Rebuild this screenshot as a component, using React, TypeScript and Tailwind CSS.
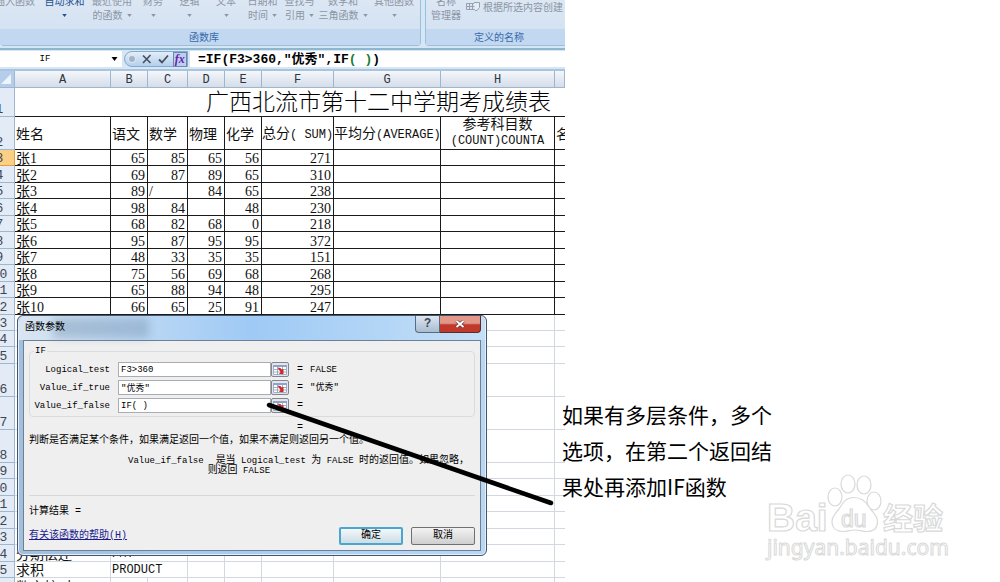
import React from "react";

const SERIF = "font-['Liberation_Serif','Noto_Sans_CJK_SC',serif]";
const MONO = "font-['Liberation_Mono','Noto_Sans_CJK_SC',monospace]";

type RibbonItem = { lines: string[]; width: string; active?: boolean; arrow: boolean };

const ribbonItems: RibbonItem[] = [
  { lines: ["自动求和"], width: "w-[49px]", active: true, arrow: true },
  { lines: ["最近使用", "的函数"], width: "w-[46px]", arrow: true },
  { lines: ["财务"], width: "w-[36px]", arrow: true },
  { lines: ["逻辑"], width: "w-[37px]", arrow: true },
  { lines: ["文本"], width: "w-[36px]", arrow: true },
  { lines: ["日期和", "时间"], width: "w-[37px]", arrow: true },
  { lines: ["查找与", "引用"], width: "w-[37px]", arrow: true },
  { lines: ["数学和", "三角函数"], width: "w-[50px]", arrow: true },
  { lines: ["其他函数"], width: "w-[52px]", arrow: true },
];

function Arrow({ className }: { className: string }) {
  return (
    <svg viewBox="0 0 6 4" className={className} fill="currentColor" aria-hidden="true">
      <path d="M0 0h6L3 4z" />
    </svg>
  );
}

function RibbonButton({ item }: { item: RibbonItem }) {
  return (
    <button
      type="button"
      className={`${item.width} flex shrink-0 flex-col items-center whitespace-nowrap ${item.active ? "text-[#24508f]" : "text-[#8b95a3]"}`}
    >
      <span>{item.lines[0]}</span>
      <span className="flex h-[14px] items-center gap-1">
        {item.lines[1]}
        {item.arrow && <Arrow className="h-[3px] w-[5px]" />}
      </span>
    </button>
  );
}

function Ribbon() {
  return (
    <div className="flex h-[50px] gap-1 overflow-hidden border-b-2 border-[#8fb6cf] bg-[#d5e6f4] pb-[2px] text-[10px] leading-[14px]">
      <section className="flex w-[421px] shrink-0 flex-col rounded-b-sm border-r border-b border-[#9dbfdd] bg-linear-to-b from-[#dce7f4] to-[#cfdff0]">
        <div className="-mt-[6px] flex h-[35px]">
          <button type="button" className="flex w-[41px] shrink-0 justify-end pr-[6px] whitespace-nowrap text-[#8b95a3]">
            插入函数
          </button>
          <div className="-mr-px h-[23px] w-px bg-[#a9bdd3]" />
          {ribbonItems.map((item) => (
            <RibbonButton key={item.lines[0]} item={item} />
          ))}
        </div>
        <div className="flex-1 bg-[#c1d8f0] pl-[189px] leading-4 text-[#3a68ab]">函数库</div>
      </section>
      <section className="flex min-w-0 flex-1 flex-col rounded-bl-sm border-b border-l border-[#9dbfdd] bg-linear-to-b from-[#dce7f4] to-[#cfdff0] text-[#8b95a3]">
        <div className="-mt-[6px] flex h-[35px]">
          <button type="button" className="flex w-[40px] shrink-0 flex-col items-center whitespace-nowrap">
            <span>名称</span>
            <span>管理器</span>
          </button>
          <button type="button" className="flex h-[26px] items-center gap-[3px] whitespace-nowrap">
            <svg viewBox="0 0 14 12" className="h-3 w-[14px]" fill="none" stroke="#96a0ae" aria-hidden="true">
              <path d="M.5 2.5h9v6h-9zM.5 5.5h9M3.5 2.5v6M6.5 2.5v6" />
              <path d="M8 1.5h5.5v5L11 9.500H9" fill="#e3ebf4" />
            </svg>
            根据所选内容创建
          </button>
        </div>
        <div className="flex-1 bg-[#c1d8f0] pl-[48px] leading-4 whitespace-nowrap text-[#3a68ab]">定义的名称</div>
      </section>
    </div>
  );
}

function FormulaBar() {
  return (
    <div className="flex h-[21px] border-b-2 border-[#a9c4dc] bg-[#d7e6f4] pt-px pb-[2px]">
      <div className="flex w-[122px] shrink-0 items-center bg-white">
        <input
          aria-label="名称框"
          defaultValue="IF"
          className={`${MONO} w-[90px] min-w-0 pt-[2px] text-center text-[9px] text-black outline-none`}
        />
        <button type="button" aria-label="名称列表" className="ml-[21px]">
          <Arrow className="h-1 w-[7px] text-black" />
        </button>
      </div>
      <div className="ml-[2px] flex w-[64px] shrink-0 items-center rounded-l-full border border-[#86a9cf] bg-linear-to-b from-[#e2edf9] to-[#b5cfec]">
        <span className="ml-1 size-[6px] rounded-full bg-[#a4b4c8] shadow-[0_0_0_1px_#dbe6f2]" />
        <button type="button" aria-label="取消输入" className="ml-[7px]">
          <svg viewBox="0 0 10 10" className="size-[10px]" fill="none" stroke="#45505e" strokeWidth="1.6" aria-hidden="true">
            <path d="M1 1.500l7.500 7.500M8.500 1L1 9" />
          </svg>
        </button>
        <button type="button" aria-label="输入" className="ml-[6px]">
          <svg viewBox="0 0 11 10" className="h-[10px] w-[11px]" fill="none" stroke="#45505e" strokeWidth="1.8" aria-hidden="true">
            <path d="M1 5.500l3 3L10 1.500" />
          </svg>
        </button>
        <button
          type="button"
          className="ml-1 h-[15px] w-[15px] border border-[#6f86b8] bg-[#bcd0ee] font-['Liberation_Serif',serif] text-[12px] leading-[12px] font-bold text-[#6a1fa8] italic"
        >
          fx
        </button>
      </div>
      <div
        role="textbox"
        aria-label="编辑栏"
        contentEditable
        suppressContentEditableWarning
        className={`${MONO} ml-[2px] min-w-0 flex-1 overflow-hidden bg-white pl-2 text-[13px] leading-[18px] font-bold whitespace-pre text-black outline-none`}
      >
        =IF(F3&gt;360,"优秀",IF<span className="text-[#1c7a2c]">( )</span>)
      </div>
    </div>
  );
}

const columns = ["A", "B", "C", "D", "E", "F", "G", "H", ""];

const students: string[][] = [
  ["张1", "65", "85", "65", "56", "271"],
  ["张2", "69", "87", "89", "65", "310"],
  ["张3", "89", "/", "84", "65", "238"],
  ["张4", "98", "84", "", "48", "230"],
  ["张5", "68", "82", "68", "0", "218"],
  ["张6", "95", "87", "95", "95", "372"],
  ["张7", "48", "33", "35", "35", "151"],
  ["张8", "75", "56", "69", "68", "268"],
  ["张9", "65", "88", "94", "48", "295"],
  ["张10", "66", "65", "25", "91", "247"],
];

const lowerRows: { n: number; height: string; a?: string; b?: string }[] = [
  { n: 13, height: "h-[16px]" },
  { n: 14, height: "h-[16px]" },
  { n: 15, height: "h-[17px]" },
  { n: 16, height: "h-[33px]" },
  { n: 17, height: "h-[33px]" },
  { n: 18, height: "h-[33px]" },
  { n: 19, height: "h-[16px]" },
  { n: 20, height: "h-[17px]" },
  { n: 21, height: "h-[16px]" },
  { n: 22, height: "h-[17px]" },
  { n: 23, height: "h-[16px]" },
  { n: 24, height: "h-[17px]", a: "分期偿还", b: "PMT" },
  { n: 25, height: "h-[16px]", a: "求积", b: "PRODUCT" },
  { n: 26, height: "h-[17px]", a: "数字校对" },
];

function RowHead({ n, selected }: { n: number; selected?: boolean }) {
  return (
    <th
      scope="row"
      className={`${MONO} border-r border-b p-0 text-center align-bottom text-[13px] leading-[12px] font-normal text-[#3c4655] ${selected ? "border-[#e0a040] bg-[#fbcf85]" : "border-[#9eb6ce] bg-[#e2ebf6]"}`}
    >
      {n}
    </th>
  );
}

const INK = "border-r border-b border-[#1a1a1a] p-0 pt-[2px]";
const GRID = "border-r border-b border-[#d3d8e0] p-0 pt-[2px]";

function Latin({ children }: { children: string }) {
  return <span className="font-['Liberation_Mono',monospace] text-[12px]">{children}</span>;
}

function Sheet() {
  return (
    <table className={`${SERIF} -ml-[15px] w-[calc(100%+15px)] table-fixed border-separate border-spacing-0 text-[14px] leading-[13px] text-[#111]`}>
      <colgroup>
        <col className="w-[30px]" />
        <col className="w-[96px]" />
        <col className="w-[37px]" />
        <col className="w-[40px]" />
        <col className="w-[37px]" />
        <col className="w-[37px]" />
        <col className="w-[72px]" />
        <col className="w-[107px]" />
        <col className="w-[114px]" />
        <col />
      </colgroup>
      <thead>
        <tr className="h-[17px]">
          <th className="border-r border-b border-[#9eb6ce] bg-[#b4cdea] p-0">
            <svg viewBox="0 0 10 10" className="mr-[3px] ml-auto size-[10px]" aria-hidden="true">
              <path d="M10 0v10H0z" fill="#eef4fb" />
            </svg>
          </th>
          {columns.map((c, i) => (
            <th
              key={i}
              scope="col"
              className={`${MONO} border-r border-b border-[#9eb6ce] bg-linear-to-b from-[#f4f7fb] to-[#d5dde9] p-0 pt-[2px] text-center text-[12px] leading-[14px] font-normal text-[#2b3442]`}
            >
              {c}
            </th>
          ))}
        </tr>
      </thead>
      <tbody>
        <tr className="h-[29px]">
          <RowHead n={1} />
          <td colSpan={9} className="border-b border-[#1a1a1a] p-0 pt-[2px] pr-[14px] text-right text-[23px] leading-[26px] font-light whitespace-nowrap text-black">
            广西北流市第十二中学期考成绩表
          </td>
        </tr>
        <tr className="h-[33px] whitespace-nowrap">
          <RowHead n={2} />
          <td className={`${INK} pl-px`}>姓名</td>
          <td className={`${INK} pl-px`}>语文</td>
          <td className={`${INK} pl-px`}>数学</td>
          <td className={`${INK} pl-px`}>物理</td>
          <td className={`${INK} pl-px`}>化学</td>
          <td className={INK}>
            总分<Latin>( SUM)</Latin>
          </td>
          <td className={INK}>
            平均分<Latin>(AVERAGE)</Latin>
          </td>
          <td className="border-r border-b border-[#1a1a1a] p-0 text-center">
            <div className="leading-4">参考科目数</div>
            <div className="font-['Liberation_Mono',monospace] text-[12px] leading-4">(COUNT)COUNTA</div>
          </td>
          <td className="overflow-hidden border-b border-[#1a1a1a] p-0 pt-[2px] pl-px">名次</td>
        </tr>
        {students.map((row, r) => (
          <tr key={row[0]} className={r % 2 === 0 ? "h-[16px]" : "h-[17px]"}>
            <RowHead n={r + 3} selected={r === 0} />
            {row.map((v, c) => (
              <td key={c} className={`${INK} ${c === 0 || v === "/" ? "pl-px text-left" : "pr-[2px] text-right"}`}>
                {v}
              </td>
            ))}
            <td className={INK} />
            <td className={INK} />
            <td className="border-b border-[#1a1a1a] p-0" />
          </tr>
        ))}
        {lowerRows.map((row) => (
          <tr key={row.n} className={row.height}>
            <RowHead n={row.n} />
            <td className={`${GRID} pl-px whitespace-nowrap`}>{row.a}</td>
            {row.b ? (
              <td colSpan={2} className={`${GRID} pl-px`}>
                <div className="font-['Liberation_Mono',monospace] text-[12px] leading-[13px]">{row.b}</div>
              </td>
            ) : (
              <>
                <td className={GRID} />
                <td className={GRID} />
              </>
            )}
            <td className={GRID} />
            <td className={GRID} />
            <td className={GRID} />
            <td className={GRID} />
            <td className={GRID} />
            <td className="border-b border-[#d3d8e0] p-0" />
          </tr>
        ))}
      </tbody>
    </table>
  );
}

const args = [
  { id: "logical_test", label: "Logical_test", value: "F3>360", result: "FALSE" },
  { id: "value_if_true", label: "Value_if_true", value: '"优秀"', result: '"优秀"' },
  { id: "value_if_false", label: "Value_if_false", value: "IF( )", result: "" },
];

function RangeIcon() {
  return (
    <svg viewBox="0 0 14 10" className="h-[10px] w-[14px]" aria-hidden="true">
      <path d="M0 0h14v10H0z" fill="#fff" />
      <path d="M0 0h14v2H0z" fill="#8fa3ca" />
      <path d="M.5 1.500v8h13v-8M.5 4.500h13M.5 7h13M4.500 2v8M9.500 2v8" fill="none" stroke="#8b9cbf" strokeWidth=".8" />
      <path d="M4.500 2.500l3 .5 1 1.500 2-.5v5H6l1.500-2z" fill="#cf2a2a" />
    </svg>
  );
}

function FunctionDialog() {
  return (
    <div
      role="dialog"
      aria-label="函数参数"
      className={`${MONO} absolute top-[315px] left-[17px] flex w-[470px] flex-col overflow-hidden rounded-md border border-[#44566b] bg-linear-to-r from-[#a3bfdc] via-[#a9cdf0] to-[#b9d7f3] px-[5px] pb-[4px] text-[10px] leading-3 text-black shadow-[inset_0_0_0_1px_#e3effa]`}
    >
      <div className="-mx-[4px] flex h-[24px] items-start rounded-t-md bg-linear-to-r from-[#d9e5f1] via-[#9fcaf5] to-[#c4dff7]">
        <div className="relative flex-1 pt-[6px] pl-[6px]">
          <span className="absolute top-[2px] left-[34px] h-5 w-[96px] bg-[#6f8dac] opacity-40 blur-[4px]" />
          <span className="relative">函数参数</span>
        </div>
        <button
          type="button"
          aria-label="帮助"
          className="h-[17px] w-[25px] rounded-bl-sm border border-t-0 border-[#5a6b80] bg-linear-to-b from-[#dde7f1] to-[#a9bccf] text-[12px] leading-4 font-bold text-[#3d4856]"
        >
          ?
        </button>
        <button
          type="button"
          aria-label="关闭"
          className="mr-[4px] flex h-[17px] w-[41px] items-center justify-center rounded-br-sm border border-t-0 border-l-0 border-[#5b2a2a] bg-linear-to-b from-[#e2978a] from-45% to-[#c0392b] to-55%"
        >
          <svg viewBox="0 0 10 8" className="h-2 w-[10px]" fill="none" aria-hidden="true">
            <path d="M1.500 1l7 6M8.500 1l-7 6" stroke="#5d2a2a" strokeWidth="3.200" />
            <path d="M1.500 1l7 6M8.500 1l-7 6" stroke="#fff" strokeWidth="2" />
          </svg>
        </button>
      </div>

      <div className="flex flex-col border border-[#6b8099] bg-[#efefef] px-[5px] pb-[5px]">
        <fieldset className="mt-1 rounded-sm border border-[#d9dcdf] pr-2 pb-[3px]">
          <legend className="ml-1 px-px text-[9px]">IF</legend>
          <div className="flex flex-col gap-[3px] pt-[5px]">
            {args.map((a) => (
              <div key={a.id} className="flex h-[15px] items-center">
                <label htmlFor={a.id} className="w-[80px] text-right text-[9px]">
                  {a.label}
                </label>
                <input
                  id={a.id}
                  defaultValue={a.value}
                  className="ml-2 h-[15px] w-[153px] min-w-0 border border-[#a8acb3] bg-white px-[2px] text-[9px] outline-none"
                />
                <button
                  type="button"
                  aria-label={`选择 ${a.label}`}
                  className="flex h-[15px] w-[18px] items-center justify-center rounded-xs border border-[#82868c] bg-[#e4e6ea]"
                >
                  <RangeIcon />
                </button>
                <span className="ml-2">=</span>
                <span className="ml-[7px] text-[9px]">{a.result}</span>
              </div>
            ))}
          </div>
        </fieldset>
        <div className="mt-[5px] ml-[268px]">=</div>
        <p className="mt-px whitespace-nowrap">判断是否满足某个条件，如果满足返回一个值，如果不满足则返回另一个值。</p>
        <dl className="mt-[9px] flex pl-[99px] text-[9px] leading-[10px] whitespace-nowrap">
          <dt>Value_if_false</dt>
          <dd className="pl-1">
            <span className="ml-2 text-[10px]">是当</span> Logical_test <span className="text-[10px]">为</span> FALSE{" "}
            <span className="text-[10px]">时的返回值。如果忽略，</span>
            <br />
            <span className="text-[10px]">则返回</span> FALSE
          </dd>
        </dl>
        <hr className="mt-[19px] border-[#d5d9de]" />
        <p className="mt-[10px]">计算结果 =</p>
        <div className="mt-[9px] flex items-center">
          <a href="#help" className="mr-auto text-[#1b1b8f] underline">
            有关该函数的帮助(H)
          </a>
          <button
            type="button"
            className="h-[18px] w-[64px] rounded-xs border-2 border-[#4ba6cf] bg-linear-to-b from-[#f3f8fb] to-[#ccdde6] leading-[14px]"
          >
            确定
          </button>
          <button
            type="button"
            className="ml-2 h-[18px] w-[64px] rounded-xs border border-[#707070] bg-linear-to-b from-[#f3f3f3] to-[#cfcfcf] leading-4"
          >
            取消
          </button>
        </div>
      </div>
    </div>
  );
}

function Watermark() {
  return (
    <svg
      viewBox="0 0 200 100"
      className="absolute right-[45px] bottom-[12px] h-[100px] w-[200px]"
      fill="#fff"
      stroke="#d9d9d9"
      strokeWidth="1.200"
      role="img"
      aria-label="Baidu 经验"
    >
      <text x="12" y="61" fontSize="39" fontWeight="700" fontFamily="Liberation Sans">
        Bai
      </text>
      <ellipse cx="80" cy="27" rx="7" ry="9" />
      <ellipse cx="93" cy="14" rx="7" ry="9" />
      <ellipse cx="109" cy="15" rx="7" ry="9" />
      <ellipse cx="119" cy="31" rx="7" ry="9" />
      <path d="M99 27.500c-8 0-11 5-14 10s-8 8-8 14c0 7 5 10 11 10 4 0 7-1.500 12-1.500s8 1.500 12 1.500c6 0 10.500-3 10.500-10 0-6-5-9-8-14s-7-10-15.500-10z" />
      <text x="86" y="57" fontSize="23" fontFamily="Liberation Sans">
        du
      </text>
      <text x="128" y="59" fontSize="30" fontWeight="700" fontFamily="Noto Sans CJK SC">
        经验
      </text>
      <text x="12" y="85" fontSize="21" fontFamily="Noto Sans" strokeWidth="1">
        jingyan.baidu.com
      </text>
    </svg>
  );
}

export default function App() {
  return (
    <main className="relative flex h-screen overflow-hidden bg-white font-['Noto_Sans_CJK_SC',sans-serif]">
      <section className="relative w-[56.5%] shrink-0 overflow-hidden">
        <Ribbon />
        <FormulaBar />
        <Sheet />
        <FunctionDialog />
        <svg viewBox="0 0 290 105" className="absolute top-[401px] left-[265px] h-[105px] w-[290px]" aria-hidden="true">
          <path d="M4 4L286 102" stroke="#000" strokeWidth="4.500" strokeLinecap="round" />
        </svg>
      </section>
      <aside className="z-10 -ml-[3px] min-w-0 flex-1 pt-[396px]">
        <p className="w-[212px] text-[21px] leading-9 text-black">如果有多层条件，多个选项，在第二个返回结果处再添加IF函数</p>
      </aside>
      <Watermark />
    </main>
  );
}
